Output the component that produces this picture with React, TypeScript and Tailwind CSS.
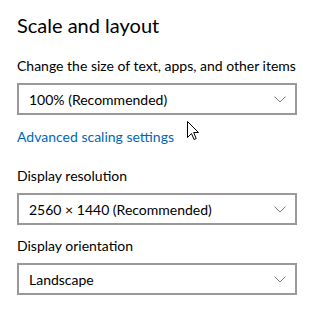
export default function App() {
  return (
    <div className="relative h-[311px] w-[322px] overflow-hidden bg-white pl-[17px] pt-[11px] font-['Lato',sans-serif] text-black">
      <h2 className="text-[20px] leading-[28px]">Scale and layout</h2>

      <div className="mt-[17px] text-[14px] leading-[20px]">Change the size of text, apps, and other items</div>
      <Select value="100% (Recommended)" />

      <div className="mt-[12px] text-[14px] leading-[20px] text-[#0067b8]">Advanced scaling settings</div>

      <div className="mt-[19px] text-[14px] leading-[20px]">Display resolution</div>
      <Select value="2560 × 1440 (Recommended)" />

      <div className="mt-[11px] text-[14px] leading-[20px]">Display orientation</div>
      <Select value="Landscape" />

      {/* mouse pointer */}
      <svg className="absolute left-[187px] top-[121px]" width="13" height="20" viewBox="0 0 13 20">
        <path
          d="M0.5 0.5 L0.5 16.5 L4.5 12.5 L7 18.5 L9.2 17.6 L6.7 11.5 L11.5 11.5 Z"
          fill="#fff"
          stroke="#000"
          strokeWidth="1"
        />
      </svg>
    </div>
  );
}

function Select({ value }: { value: string }) {
  return (
    <div className="mt-[7px] flex h-[32px] w-[280px] items-center justify-between border-2 border-[#999] pl-[10px] pr-[9px] text-[14px]">
      <span>{value}</span>
      <svg width="12" height="7" viewBox="0 0 12 7" fill="none">
        <path d="M0.5 0.5 L6 6 L11.5 0.5" stroke="#7a7a7a" strokeWidth="1" />
      </svg>
    </div>
  );
}
